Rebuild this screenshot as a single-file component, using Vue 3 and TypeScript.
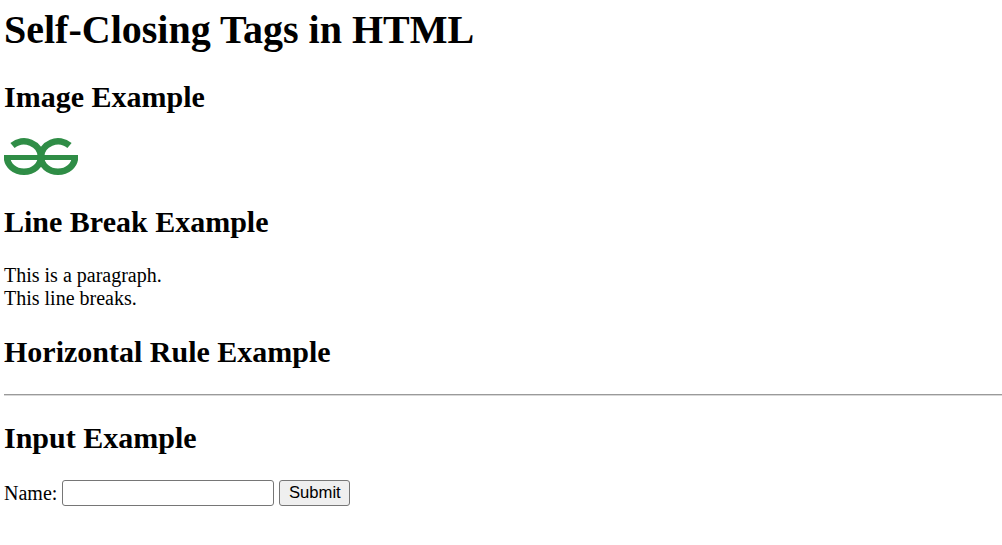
<script setup lang="ts">
const title = 'Self-Closing Tags in HTML'
</script>

<template>
  <div class="page">
    <h1>{{ title }}</h1>
    <h2>Image Example</h2>
    <svg class="logo" width="74" height="37" viewBox="0 0 74 37" fill="none" stroke="#2f8d46" stroke-width="6.5">
      <path d="M0 19.500H74" stroke-width="5" />
      <path d="M3 19A17 14.750 0 0 0 37 19A17 15.750 0 0 0 8.500 7.500" />
      <path d="M71 19A17 14.750 0 0 1 37 19A17 15.750 0 0 1 65.500 7.500" />
    </svg>
    <h2>Line Break Example</h2>
    <p>This is a paragraph.<br />This line breaks.</p>
    <h2>Horizontal Rule Example</h2>
    <hr />
    <h2>Input Example</h2>
    <form @submit.prevent>
      <label for="name">Name:</label>
      <input id="name" type="text" />
      <button type="submit">Submit</button>
    </form>
  </div>
</template>

<style>
html,
body {
  overflow: hidden;
}
</style>

<style scoped>
.page {
  padding: 7px 0 0 4px;
  font-family: "Liberation Serif", serif;
  font-size: 20px;
  color: #000;
}

h1 {
  margin: 0 0 27px;
  font-size: 40px;
  line-height: 46px;
}

h2 {
  margin: 0 0 25px;
  font-size: 30px;
  line-height: 34px;
}

.logo {
  display: block;
  margin: -1px 0 30px;
}

p {
  margin: 0 0 25px;
  line-height: 23px;
}

hr {
  margin: 0 0 25px;
  height: 2px;
  border: 0;
  background: linear-gradient(#9a9a9a 50%, #d8d8d8 50%);
}

form {
  display: flex;
  align-items: center;
  height: 26px;
}

label {
  margin-right: 5px;
}

input {
  box-sizing: border-box;
  width: 212px;
  height: 26px;
  margin: 0 5px 0 0;
  padding: 1px 2px;
  border: 1px solid #767676;
  border-radius: 3px;
  background: #fff;
  font-size: 16.67px;
}

button {
  box-sizing: border-box;
  width: 71px;
  height: 26px;
  margin: 0;
  padding: 0;
  border: 1px solid #767676;
  border-radius: 3px;
  background: #efefef;
  color: #000;
  font-family: "Liberation Sans", sans-serif;
  font-size: 16.67px;
}
</style>
